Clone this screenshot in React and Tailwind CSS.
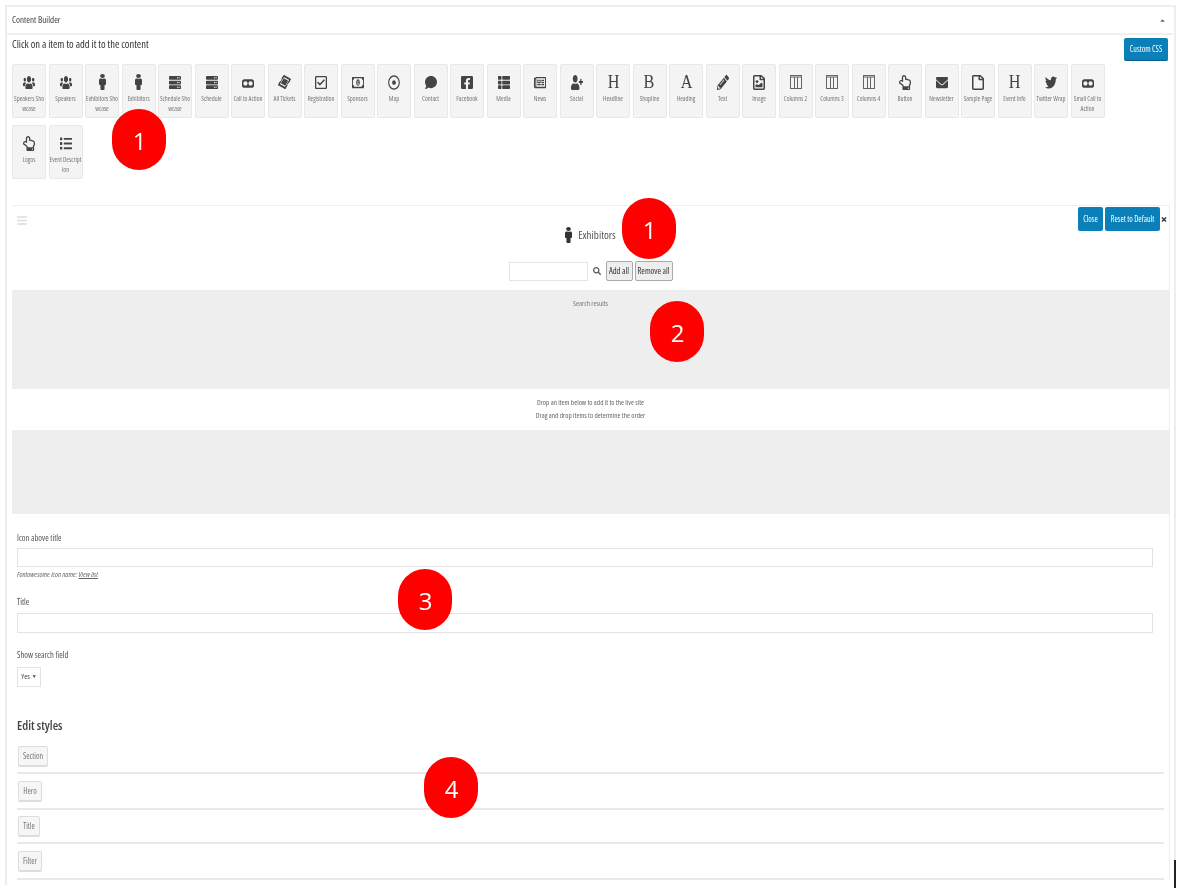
import React from 'react';
import {
  FaUsers, FaMale, FaServer, FaTicketAlt, FaRegCheckSquare, FaRegMoneyBillAlt,
  FaRegDotCircle, FaComment, FaFacebookSquare, FaThList, FaRegNewspaper, FaUserPlus, FaPencilAlt,
  FaRegFileImage, FaRegHandPointUp, FaEnvelope, FaRegFile, FaTwitter, FaList, FaSearch, FaTimes, FaBars, FaCaretUp,
} from 'react-icons/fa';

// squeezed pill with two holes, the call to action glyph
const CtaIcon = () => (
  <svg viewBox="0 0 14 10" className="w-[12px] h-[9px] mt-[3px]" fill="currentColor">
    <path fillRule="evenodd" d="M3 0h8a3 3 0 0 1 3 3v4a3 3 0 0 1-3 3H3a3 3 0 0 1-3-3V3a3 3 0 0 1 3-3zM4 2.500a2.500 2.500 0 1 0 0 5a2.500 2.500 0 0 0 0-5zM10 2.500a2.500 2.500 0 1 0 0 5a2.500 2.500 0 0 0 0-5z" />
  </svg>
);

const ColumnsIcon = () => (
  <svg viewBox="0 0 12 14" className="w-[12px] h-[14px] text-[#666]" fill="none" stroke="currentColor" strokeWidth="1">
    <rect x="0.500" y="0.500" width="11" height="13" />
    <path d="M1 2h10M4.500 2v11.500M7.500 2v11.500" />
  </svg>
);

const tiles = [
  { icon: FaUsers, lines: ['Speakers Sho', 'wcase'] },
  { icon: FaUsers, lines: ['Speakers'] },
  { icon: FaMale, slim: true, lines: ['Exhibitors Sho', 'wcase'] },
  { icon: FaMale, slim: true, lines: ['Exhibitors'] },
  { icon: FaServer, lines: ['Schedule Sho', 'wcase'] },
  { icon: FaServer, lines: ['Schedule'] },
  { custom: CtaIcon, lines: ['Call to Action'] },
  { icon: FaTicketAlt, rotate: true, lines: ['All Tickets'] },
  { icon: FaRegCheckSquare, lines: ['Registration'] },
  { icon: FaRegMoneyBillAlt, lines: ['Sponsors'] },
  { icon: FaRegDotCircle, lines: ['Map'] },
  { icon: FaComment, lines: ['Contact'] },
  { icon: FaFacebookSquare, lines: ['Facebook'] },
  { icon: FaThList, lines: ['Media'] },
  { icon: FaRegNewspaper, lines: ['News'] },
  { icon: FaUserPlus, lines: ['Social'] },
  { letter: 'H', lines: ['Headline'] },
  { letter: 'B', lines: ['Shopline'] },
  { letter: 'A', lines: ['Heading'] },
  { icon: FaPencilAlt, lines: ['Text'] },
  { icon: FaRegFileImage, lines: ['Image'] },
  { custom: ColumnsIcon, lines: ['Columns 2'] },
  { custom: ColumnsIcon, lines: ['Columns 3'] },
  { custom: ColumnsIcon, lines: ['Columns 4'] },
  { icon: FaRegHandPointUp, lines: ['Button'] },
  { icon: FaEnvelope, lines: ['Newsletter'] },
  { icon: FaRegFile, lines: ['Sample Page'] },
  { letter: 'H', lines: ['Event Info'] },
  { icon: FaTwitter, lines: ['Twitter Wrap'] },
  { custom: CtaIcon, lines: ['Small Call to', 'Action'] },
  { icon: FaRegHandPointUp, lines: ['Logos'] },
  { icon: FaList, lines: ['Event Descript', 'ion'] },
];

const markers = [
  { n: 1, pos: 'left-[112px] top-[109px]' },
  { n: 1, pos: 'left-[622px] top-[198px]' },
  { n: 2, pos: 'left-[650px] top-[301px]' },
  { n: 3, pos: 'left-[398px] top-[569px]' },
  { n: 4, pos: 'left-[424px] top-[757px]' },
];

const narrow = 'font-["Open_Sans",sans-serif] [font-stretch:75%]';

const iconSize = tile => {
  if (tile.rotate) return 'w-[9px] h-[16px] rotate-[30deg]';
  if (tile.slim) return 'w-[7px] h-[16px]';
  return 'w-[12px] h-[15px]';
};

const Tile = ({ tile }) => {
  const Icon = tile.icon;
  const Custom = tile.custom;
  return (
    <div className="w-[34px] h-[54px] bg-[#f4f4f4] border border-[#e8e8e8] rounded-[2px] flex flex-col items-center pt-[7px] text-[#444]">
      <div className="h-[20px] flex items-center justify-center">
        {tile.letter && (
          <span className='text-[18px] leading-none scale-x-90 font-["Liberation_Serif",serif]'>{tile.letter}</span>
        )}
        {Custom && <Custom />}
        {Icon && <Icon preserveAspectRatio="none" className={iconSize(tile)} />}
      </div>
      <div className="mt-[2px] w-full text-center text-[6.5px] leading-[10px] whitespace-nowrap text-[#777]">
        {tile.lines.map(l => <div key={l}>{l}</div>)}
      </div>
    </div>
  );
};

const StyleRow = ({ label, width, pad }) => (
  <div className={`flex border-b-2 border-[#e9e9e9] ${pad}`}>
    <button className={`${width} ml-[1px] h-[21px] bg-[#f6f6f6] border border-[#ddd] border-b-2 rounded-[2px] text-[8px] text-[#777]`}>{label}</button>
  </div>
);

const App = () => {
  return (
    <div className={`relative w-[1180px] h-[892px] bg-white overflow-hidden text-[#555] blur-[0.35px] ${narrow}`}>
      <div className="absolute left-[5px] top-[5px] w-[1171px] h-[880px] border-t-2 border-l-2 border-r-2 border-[#eee] pointer-events-none" />

      <div className="pl-[12px] pr-[12px] pt-[7px]">
        {/* Content builder header */}
        <div className="h-[28px] flex items-center justify-between border-b-2 border-[#f0f0f0] -mx-[5px] px-[5px]">
          <span className="text-[9px] text-[#444]">Content Builder</span>
          <FaCaretUp className="w-[7px] h-[7px] text-[#666] mr-[2px]" />
        </div>

        <div className="flex justify-between">
          <div className="w-[1110px]">
            <p className="text-[10.5px] leading-[14px] mt-[2px] text-[#333]">Click on a item to add it to the content</p>
            <div className="flex flex-wrap gap-x-[2.5px] gap-y-[7px] mt-[13px]">
              {tiles.map((t, i) => <Tile key={i} tile={t} />)}
            </div>
          </div>
          <button className="w-[44px] h-[23px] mt-[3px] bg-[#0a7fb8] border-b border-[#08618c] rounded-[2px] text-white text-[8px]">Custom CSS</button>
        </div>

        {/* Exhibitors block */}
        <div className="mt-[26px] w-[1158px] border-t border-[#eee] border-r">
          <div className="relative h-[84px]">
            <FaBars className="absolute left-[5px] top-[9px] w-[10px] h-[11px] text-[#ddd]" />
            <div className="absolute right-[2px] top-[1px] flex items-center">
              <button className="w-[25px] h-[24px] bg-[#0a7fb8] rounded-[2px] text-white text-[8px]">Close</button>
              <button className="w-[55px] h-[24px] ml-[2px] bg-[#0a7fb8] rounded-[2px] text-white text-[8px]">Reset to Default</button>
              <FaTimes className="w-[6px] h-[7px] text-[#333] ml-[1px]" />
            </div>
            <div className="flex flex-col items-center">
              <div className="flex items-center gap-[6px] mt-[20px] h-[18px]">
                <FaMale preserveAspectRatio="none" className="w-[7px] h-[16px] text-[#333]" />
                <span className="text-[11px] text-[#555]">Exhibitors</span>
              </div>
              <div className="flex items-center mt-[17px]">
                <input className="w-[79px] h-[19px] border border-[#e5e5e5] bg-white" />
                <FaSearch className="w-[8px] h-[8px] ml-[5px] mr-[5px] text-[#555]" />
                <button className="w-[27px] h-[20px] bg-[#eee] border border-[#aaa] rounded-[2px] text-[8.5px] text-[#333]">Add all</button>
                <button className="w-[38px] h-[20px] ml-[2px] bg-[#eee] border border-[#aaa] rounded-[2px] text-[8.5px] text-[#333]">Remove all</button>
              </div>
            </div>
          </div>

          <div className="h-[99px] bg-[#eeeeee] text-center text-[7.25px] pt-[8px] text-[#777]">Search results</div>
          <div className="h-[41px] text-center text-[7.25px] leading-[13px] pt-[7px] text-[#666]">
            <div>Drop an item below to add it to the live site</div>
            <div>Drag and drop items to determine the order</div>
          </div>
          <div className="h-[84px] bg-[#eeeeee]" />

          {/* Fields */}
          <div className="pl-[5px] pr-[5px] pt-[17px]">
            <label className="block text-[8.5px] leading-[13px] text-[#555]">Icon above title</label>
            <input className="block mt-[4px] w-[1136px] h-[19px] border border-[#e3e3e3]" />
            <p className="mt-[2px] text-[7.5px] leading-[10px] italic text-[#666]">
              Fontowesome icon name: <span className="underline">View list</span>
            </p>
            <label className="block mt-[16px] text-[8.5px] leading-[13px] text-[#555]">Title</label>
            <input className="block mt-[5px] w-[1136px] h-[20px] border border-[#e3e3e3]" />
            <label className="block mt-[15px] text-[8.5px] leading-[13px] text-[#555]">Show search field</label>
            <div className="mt-[6px] w-[24px] h-[20px] border border-[#e3e3e3] flex items-center justify-center gap-[2px] text-[7.5px] text-[#444]">
              Yes <span className="text-[5px]">▼</span>
            </div>
            <h3 className="mt-[30px] text-[12.5px] leading-[18px] font-semibold text-[#444]">Edit styles</h3>
            <div className="mt-[11px]">
              <StyleRow label="Section" width="w-[30px]" pad="pb-[5px]" />
              <StyleRow label="Hero" width="w-[24px]" pad="pt-[7px] pb-[6px]" />
              <StyleRow label="Title" width="w-[22px]" pad="pt-[6px] pb-[5px]" />
              <StyleRow label="Filter" width="w-[24px]" pad="pt-[7px] pb-[6px]" />
            </div>
          </div>
        </div>
      </div>

      <div className="absolute left-[1174px] top-[860px] w-[2px] h-[28px] bg-[#222]" />

      {markers.map((m, i) => (
        <div key={i} className={`absolute ${m.pos} w-[54px] h-[61px] pt-[3px] pl-[1px] rounded-full bg-[#fe0000] flex items-center justify-center text-white text-[24px] [font-stretch:100%]`}>
          {m.n}
        </div>
      ))}
    </div>
  );
};

export default App;
